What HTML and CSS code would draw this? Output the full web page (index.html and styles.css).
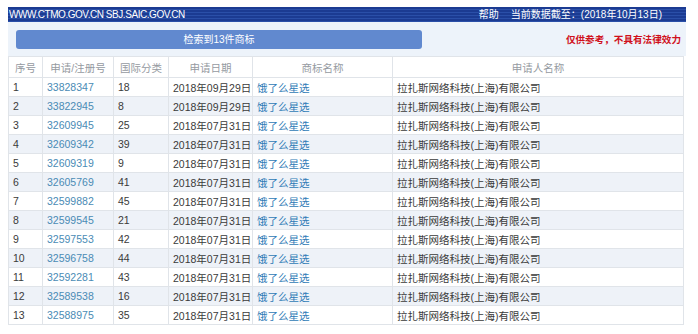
FILE: index.html
```html
<!DOCTYPE html>
<html lang="zh-CN">
<head>
<meta charset="utf-8">
<title>商标查询结果</title>
<link rel="stylesheet" href="styles.css">
</head>
<body>
<div class="page">
  <div class="topbar">
    <span class="site">WWW.CTMO.GOV.CN SBJ.SAIC.GOV.CN</span>
    <span class="topright"><span class="help">帮助</span><span>当前数据截至：(2018年10月13日)</span></span>
  </div>
  <div class="panel">
    <div class="btn">检索到13件商标</div>
    <div class="notice">仅供参考，不具有法律效力</div>
  </div>
  <table class="grid">
    <colgroup>
      <col class="c1"><col class="c2"><col class="c3"><col class="c4"><col class="c5"><col class="c6">
    </colgroup>
    <thead>
      <tr><th>序号</th><th>申请/注册号</th><th>国际分类</th><th>申请日期</th><th>商标名称</th><th>申请人名称</th></tr>
    </thead>
    <tbody>
      <tr><td>1</td><td class="num">33828347</td><td>18</td><td>2018年09月29日</td><td class="link">饿了么星选</td><td>拉扎斯网络科技(上海)有限公司</td></tr>
      <tr><td>2</td><td class="num">33822945</td><td>8</td><td>2018年09月29日</td><td class="link">饿了么星选</td><td>拉扎斯网络科技(上海)有限公司</td></tr>
      <tr><td>3</td><td class="num">32609945</td><td>25</td><td>2018年07月31日</td><td class="link">饿了么星选</td><td>拉扎斯网络科技(上海)有限公司</td></tr>
      <tr><td>4</td><td class="num">32609342</td><td>39</td><td>2018年07月31日</td><td class="link">饿了么星选</td><td>拉扎斯网络科技(上海)有限公司</td></tr>
      <tr><td>5</td><td class="num">32609319</td><td>9</td><td>2018年07月31日</td><td class="link">饿了么星选</td><td>拉扎斯网络科技(上海)有限公司</td></tr>
      <tr><td>6</td><td class="num">32605769</td><td>41</td><td>2018年07月31日</td><td class="link">饿了么星选</td><td>拉扎斯网络科技(上海)有限公司</td></tr>
      <tr><td>7</td><td class="num">32599882</td><td>45</td><td>2018年07月31日</td><td class="link">饿了么星选</td><td>拉扎斯网络科技(上海)有限公司</td></tr>
      <tr><td>8</td><td class="num">32599545</td><td>21</td><td>2018年07月31日</td><td class="link">饿了么星选</td><td>拉扎斯网络科技(上海)有限公司</td></tr>
      <tr><td>9</td><td class="num">32597553</td><td>42</td><td>2018年07月31日</td><td class="link">饿了么星选</td><td>拉扎斯网络科技(上海)有限公司</td></tr>
      <tr><td>10</td><td class="num">32596758</td><td>44</td><td>2018年07月31日</td><td class="link">饿了么星选</td><td>拉扎斯网络科技(上海)有限公司</td></tr>
      <tr><td>11</td><td class="num">32592281</td><td>43</td><td>2018年07月31日</td><td class="link">饿了么星选</td><td>拉扎斯网络科技(上海)有限公司</td></tr>
      <tr><td>12</td><td class="num">32589538</td><td>16</td><td>2018年07月31日</td><td class="link">饿了么星选</td><td>拉扎斯网络科技(上海)有限公司</td></tr>
      <tr><td>13</td><td class="num">32588975</td><td>35</td><td>2018年07月31日</td><td class="link">饿了么星选</td><td>拉扎斯网络科技(上海)有限公司</td></tr>
    </tbody>
  </table>
</div>
</body>
</html>
```
FILE: styles.css
```css
html, body {
  margin: 0;
  padding: 0;
  background: #ffffff;
}
body {
  font-family: "Liberation Sans", "Noto Sans CJK SC", sans-serif;
  font-size: 10.5px;
  color: #3a3a3a;
}
.page {
  margin: 7px 12px 0 8px;
}
.topbar {
  height: 15px;
  display: flex;
  align-items: center;
  justify-content: space-between;
  background: repeating-linear-gradient(to bottom, #1b3b92 0px, #1b3b92 2px, #2a4fa8 2px, #2a4fa8 3px);
  color: #fff;
  padding: 0 24px 0 1px;
  line-height: 15px;
}
.site {
  font-size: 10px;
  letter-spacing: -0.45px;
}
.topright {
  display: flex;
  gap: 12px;
  font-size: 10px;
}
.panel {
  height: 34px;
  background: #edf3fa;
  display: flex;
  align-items: center;
  justify-content: space-between;
  padding: 0 5px 0 8px;
}
.btn {
  width: 406px;
  height: 19px;
  margin-top: 1px;
  line-height: 19px;
  background: #6189cf;
  border-radius: 3px;
  color: #fff;
  text-align: center;
  font-size: 10px;
}
.notice {
  color: #d0101b;
  font-size: 9.6px;
  font-weight: bold;
}
.grid {
  width: 676px;
  border-collapse: collapse;
  table-layout: fixed;
}
.c1 { width: 34px; }
.c2 { width: 71px; }
.c3 { width: 55px; }
.c4 { width: 84px; }
.c5 { width: 140px; }
.grid th, .grid td {
  border: 1px solid #e0e4e9;
  padding: 0 0 0 4px;
  white-space: nowrap;
  overflow: hidden;
}
.grid th {
  height: 20px;
  font-weight: normal;
  color: #959aa1;
  text-align: center;
  padding: 0;
  background: #ffffff;
}
.grid td {
  height: 18px;
  text-align: left;
}
.grid tbody tr:nth-child(even) td {
  background: #eef2f8;
}
.grid td.num {
  color: #4a8bb5;
}
.grid td.link {
  color: #2f7bb6;
}
```
